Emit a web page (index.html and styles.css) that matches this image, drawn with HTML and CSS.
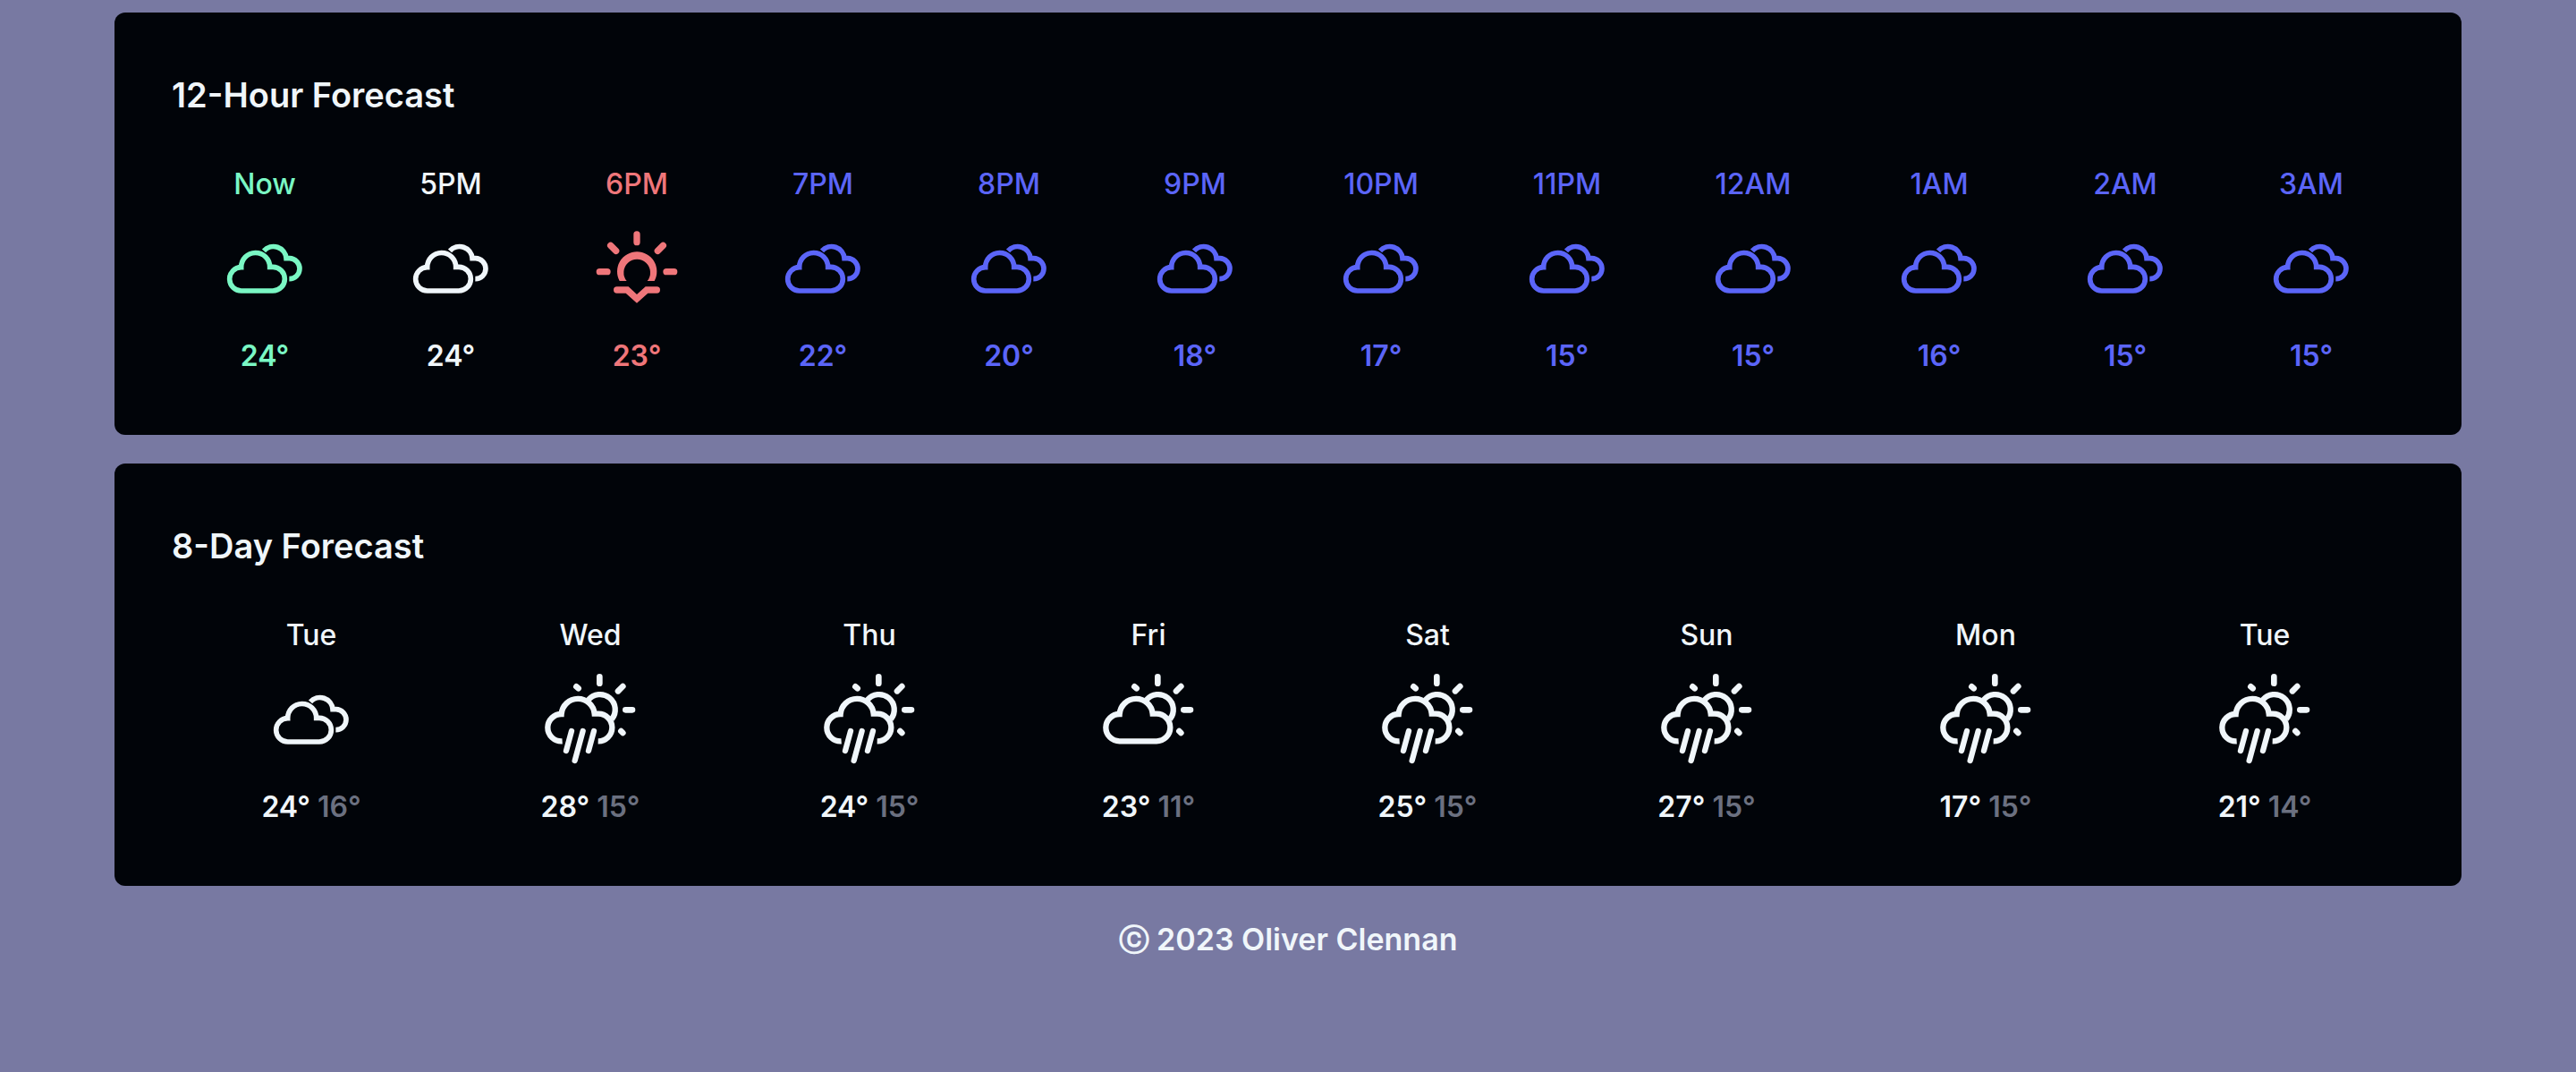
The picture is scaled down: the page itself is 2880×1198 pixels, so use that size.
FILE: index.html
```
<!DOCTYPE html>
<html lang="en">
<head>
<meta charset="utf-8">
<meta name="viewport" content="width=device-width, initial-scale=1">
<title>Weather Forecast</title>
<link rel="stylesheet" href="styles.css">
</head>
<body>
<svg class="sprite" aria-hidden="true">
  <symbol id="cloudy" viewBox="0 0 336 336">
    <g transform="translate(-30 -18)" fill="none" stroke="currentColor" stroke-width="17">
      <path d="M120 255A39.5 39.5 0 0 1 119 176A48 48 0 0 1 215 175H225A40 40 0 0 1 225 255Z"/>
      <path d="M195 121A43 43 0 0 1 270 146H281A34.500 34.500 0 0 1 280 215"/>
    </g>
  </symbol>
  <symbol id="sunset" viewBox="0 0 336 336">
    <g transform="translate(-48 -18)" fill="currentColor">
      <path d="M158 222A66.500 66.500 0 1 1 275 222H251A44.500 44.500 0 1 0 182 222Z"/>
      <path d="M149 241H188L216 267L245 241H283A11 11 0 0 1 283 263H253L216 296L179 263H149A11 11 0 0 1 149 241Z"/>
      <path d="M216 66V92M91 191H117M315 191H341M128 103L146 121M304 103L286 121" fill="none" stroke="currentColor" stroke-width="22" stroke-linecap="round"/>
    </g>
  </symbol>
  <symbol id="sun-behind" viewBox="0 0 336 336">
    <g transform="translate(-72 -30)" fill="none" stroke="currentColor">
      <path d="M233 127A50 50 0 0 1 312 191" stroke-width="19"/>
      <path d="M271 49V71M349 81L333 97M358 160H381M193 82L200 88M343 231L349 237" stroke-width="20" stroke-linecap="round"/>
    </g>
  </symbol>
  <symbol id="day-cloudy" viewBox="0 0 336 336">
    <use href="#sun-behind"/>
    <g transform="translate(-72 -30)" fill="none" stroke="currentColor" stroke-width="19">
      <path d="M143 265A46 46 0 0 1 97 219A46 46 0 0 1 143 174A55.700 55.700 0 0 1 254 173H267A46 46 0 0 1 313 219A46 46 0 0 1 267 265Z"/>
    </g>
  </symbol>
  <symbol id="day-rain" viewBox="0 0 336 336">
    <use href="#sun-behind"/>
    <g transform="translate(-72 -30)" fill="none" stroke="currentColor" stroke-width="19">
      <path d="M146 265A46 46 0 0 1 97 219A46 46 0 0 1 143 174A55.700 55.700 0 0 1 254 173H267A46 46 0 0 1 313 219A46 46 0 0 1 266 265"/>
      <path d="M177 231L159 297M215 231L188 330M252 231L234 297" stroke-linecap="round"/>
    </g>
  </symbol>
</svg>
<main class="forecasts">
  <section class="card" aria-labelledby="hourly-title">
    <h2 class="card-title" id="hourly-title">12-Hour Forecast</h2>
    <ol class="slots">
      <li class="slot now"><span>Now</span><svg class="icon"><use href="#cloudy"/></svg><span class="temp">24°</span></li>
      <li class="slot"><span>5PM</span><svg class="icon"><use href="#cloudy"/></svg><span class="temp">24°</span></li>
      <li class="slot sunset"><span>6PM</span><svg class="icon"><use href="#sunset"/></svg><span class="temp">23°</span></li>
      <li class="slot night"><span>7PM</span><svg class="icon"><use href="#cloudy"/></svg><span class="temp">22°</span></li>
      <li class="slot night"><span>8PM</span><svg class="icon"><use href="#cloudy"/></svg><span class="temp">20°</span></li>
      <li class="slot night"><span>9PM</span><svg class="icon"><use href="#cloudy"/></svg><span class="temp">18°</span></li>
      <li class="slot night"><span>10PM</span><svg class="icon"><use href="#cloudy"/></svg><span class="temp">17°</span></li>
      <li class="slot night"><span>11PM</span><svg class="icon"><use href="#cloudy"/></svg><span class="temp">15°</span></li>
      <li class="slot night"><span>12AM</span><svg class="icon"><use href="#cloudy"/></svg><span class="temp">15°</span></li>
      <li class="slot night"><span>1AM</span><svg class="icon"><use href="#cloudy"/></svg><span class="temp">16°</span></li>
      <li class="slot night"><span>2AM</span><svg class="icon"><use href="#cloudy"/></svg><span class="temp">15°</span></li>
      <li class="slot night"><span>3AM</span><svg class="icon"><use href="#cloudy"/></svg><span class="temp">15°</span></li>
    </ol>
  </section>
  <section class="card" aria-labelledby="daily-title">
    <h2 class="card-title" id="daily-title">8-Day Forecast</h2>
    <ol class="slots">
      <li class="slot"><span>Tue</span><svg class="icon"><use href="#cloudy"/></svg><span class="temp">24° <span class="low">16°</span></span></li>
      <li class="slot"><span>Wed</span><svg class="icon"><use href="#day-rain"/></svg><span class="temp">28° <span class="low">15°</span></span></li>
      <li class="slot"><span>Thu</span><svg class="icon"><use href="#day-rain"/></svg><span class="temp">24° <span class="low">15°</span></span></li>
      <li class="slot"><span>Fri</span><svg class="icon"><use href="#day-cloudy"/></svg><span class="temp">23° <span class="low">11°</span></span></li>
      <li class="slot"><span>Sat</span><svg class="icon"><use href="#day-rain"/></svg><span class="temp">25° <span class="low">15°</span></span></li>
      <li class="slot"><span>Sun</span><svg class="icon"><use href="#day-rain"/></svg><span class="temp">27° <span class="low">15°</span></span></li>
      <li class="slot"><span>Mon</span><svg class="icon"><use href="#day-rain"/></svg><span class="temp">17° <span class="low">15°</span></span></li>
      <li class="slot"><span>Tue</span><svg class="icon"><use href="#day-rain"/></svg><span class="temp">21° <span class="low">14°</span></span></li>
    </ol>
  </section>
</main>
<footer class="footer">ⓒ 2023 Oliver Clennan</footer>
</body>
</html>
```
FILE: styles.css
```
* {
  box-sizing: border-box;
}

body {
  margin: 0;
  padding: 14px 128px 64px;
  background: #7879a2;
  color: #f0f6fa;
  font-family: Inter, "Liberation Sans", sans-serif;
  font-size: 32px;
  font-weight: 500;
  line-height: 48px;
}

.sprite {
  display: none;
}

.forecasts {
  display: flex;
  flex-direction: column;
  gap: 32px;
}

.card {
  padding: 64px;
  border-radius: 12px;
  background: #010409;
}

.card-title {
  margin: 0 0 48px;
  font-size: 38px;
  font-weight: 600;
  line-height: 56px;
}

.slots {
  display: flex;
  margin: 0;
  padding: 0;
  list-style: none;
}

.slot {
  display: flex;
  flex: 1 1 0;
  flex-direction: column;
  align-items: center;
  gap: 16px;
}

.icon {
  width: 112px;
  height: 112px;
}

.temp {
  font-weight: 600;
}

.now {
  color: #7af7c4;
}

.sunset {
  color: #ef767a;
}

.night {
  color: #5b65f8;
}

.low {
  color: #6b7080;
}

.footer {
  margin-top: 32px;
  font-size: 34px;
  font-weight: 600;
  line-height: 56px;
  text-align: center;
}
```
